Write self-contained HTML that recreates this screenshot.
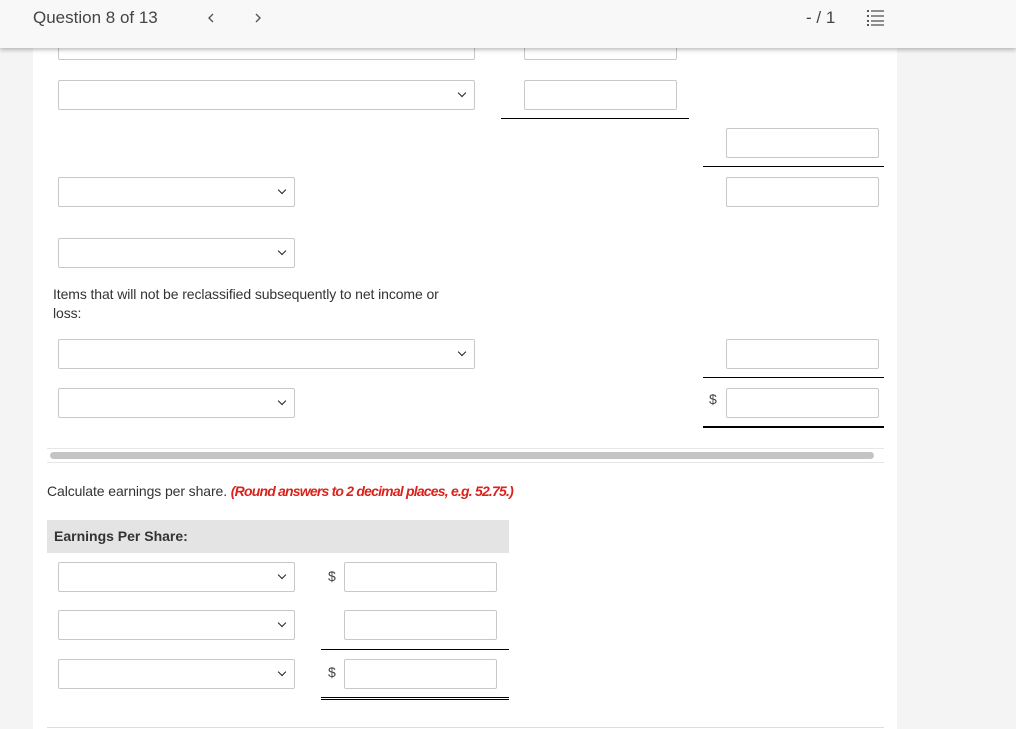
<!DOCTYPE html>
<html><head><style>
body{margin:0;width:1016px;height:729px;background:#f4f4f4;font-family:"Liberation Sans",sans-serif;position:relative;overflow:hidden;color:#333}
.card{position:absolute;left:33px;top:0;width:864px;height:729px;background:#fff}
.a{position:absolute;box-sizing:border-box}
.s,.i{position:absolute;box-sizing:border-box;border:1px solid #c8c8c8;background:#fff;height:30px;border-radius:2px}
.s::after{content:"";position:absolute;right:9px;top:9px;width:5px;height:5px;border-right:1.7px solid #222;border-bottom:1.7px solid #222;transform:rotate(45deg)}
.l{position:absolute;height:0;border-top:1px solid #000}
.d{position:absolute;font-size:14px;color:#444}
.hdr{position:absolute;left:0;top:0;width:1016px;height:48px;background:#f8f8f8;box-shadow:0 2px 4px rgba(0,0,0,.25);z-index:5}
</style></head><body>
<div class="card"></div>
<div class="s" style="left:58px;top:30px;width:417px"></div>
<div class="i" style="left:524px;top:30px;width:153px"></div>
<div class="s" style="left:58px;top:80px;width:417px"></div>
<div class="i" style="left:524px;top:80px;width:153px"></div>
<div class="l" style="left:501px;top:118px;width:188px"></div>
<div class="i" style="left:726px;top:128px;width:153px"></div>
<div class="l" style="left:703px;top:166px;width:181px"></div>
<div class="s" style="left:58px;top:177px;width:237px"></div>
<div class="i" style="left:726px;top:177px;width:153px"></div>
<div class="s" style="left:58px;top:238px;width:237px"></div>
<div class="a" style="left:53px;top:285px;font-size:14px;line-height:19px;width:405px;color:#333;letter-spacing:-0.1px">Items that will not be reclassified subsequently to net income or loss:</div>
<div class="s" style="left:58px;top:339px;width:417px"></div>
<div class="i" style="left:726px;top:339px;width:153px"></div>
<div class="l" style="left:703px;top:377px;width:181px"></div>
<div class="s" style="left:58px;top:388px;width:237px"></div>
<div class="d" style="left:709px;top:391px">$</div>
<div class="i" style="left:726px;top:388px;width:153px"></div>
<div class="l" style="left:703px;top:426px;width:181px;border-top-width:2px"></div>
<div class="a" style="left:47px;top:448px;width:837px;height:15px;border-top:1px solid #e6e6e6;border-bottom:1px solid #e6e6e6"></div>
<div class="a" style="left:50px;top:452px;width:824px;height:7px;background:#c4c4c4;border-radius:4px"></div>
<div class="a" style="left:47px;top:483px;font-size:14px;color:#333;letter-spacing:-0.1px">Calculate earnings per share. <b style="color:#d9231c;font-style:italic;letter-spacing:-0.8px">(Round answers to 2 decimal places, e.g. 52.75.)</b></div>
<div class="a" style="left:47px;top:520px;width:462px;height:33px;background:#e4e4e4;font-size:14px;font-weight:bold;padding:8px 7px;color:#333">Earnings Per Share:</div>
<div class="s" style="left:58px;top:562px;width:237px"></div>
<div class="d" style="left:328px;top:568px">$</div>
<div class="i" style="left:344px;top:562px;width:153px"></div>
<div class="s" style="left:58px;top:610px;width:237px"></div>
<div class="i" style="left:344px;top:610px;width:153px"></div>
<div class="l" style="left:321px;top:649px;width:188px"></div>
<div class="s" style="left:58px;top:659px;width:237px"></div>
<div class="d" style="left:328px;top:664px">$</div>
<div class="i" style="left:344px;top:659px;width:153px"></div>
<div class="l" style="left:321px;top:697px;width:188px"></div>
<div class="l" style="left:321px;top:699px;width:188px"></div>
<div class="a" style="left:47px;top:727px;width:837px;height:1px;background:#ddd"></div>
<div class="hdr">
<div class="a" style="left:33px;top:8px;font-size:17px;color:#444">Question 8 of 13</div>
<svg class="a" style="left:206px;top:12px" width="10" height="12"><path d="M7 2L3 6L7 10" fill="none" stroke="#555" stroke-width="1.4"/></svg>
<svg class="a" style="left:253px;top:12px" width="10" height="12"><path d="M3 2L7 6L3 10" fill="none" stroke="#555" stroke-width="1.4"/></svg>
<div class="a" style="left:806px;top:8px;font-size:17px;color:#444">- / 1</div>
<svg class="a" style="left:866px;top:9px" width="20" height="18"><g stroke="#555" stroke-width="1.3"><line x1="5" y1="2" x2="18" y2="2"/><line x1="5" y1="7" x2="18" y2="7"/><line x1="5" y1="12" x2="18" y2="12"/><line x1="5" y1="16" x2="18" y2="16"/></g><g fill="#555"><rect x="1" y="1" width="2" height="2"/><rect x="1" y="6" width="2" height="2"/><rect x="1" y="11" width="2" height="2"/><rect x="1" y="15" width="2" height="2"/></g></svg>
</div>
</body></html>
